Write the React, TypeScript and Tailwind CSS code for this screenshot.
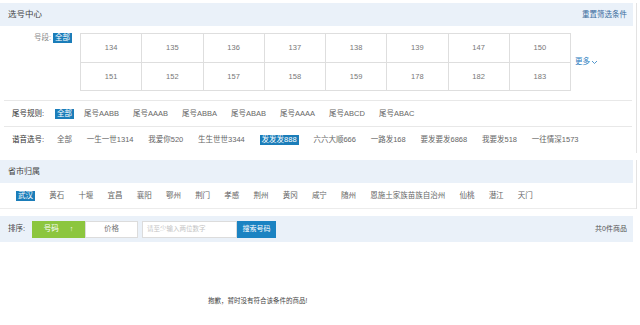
import React from 'react';

const SEGMENTS = ['134', '135', '136', '137', '138', '139', '147', '150', '151', '152', '157', '158', '159', '178', '182', '183'];
const TAIL_RULES = ['尾号AABB', '尾号AAAB', '尾号ABBA', '尾号ABAB', '尾号AAAA', '尾号ABCD', '尾号ABAC'];
const HOMOPHONES = ['全部', '一生一世1314', '我爱你520', '生生世世3344', '发发发888', '六六大顺666', '一路发168', '要发要发6868', '我要发518', '一往情深1573'];
const CITIES = ['武汉', '黄石', '十堰', '宜昌', '襄阳', '鄂州', '荆门', '孝感', '荆州', '黄冈', '咸宁', '随州', '恩施土家族苗族自治州', '仙桃', '潜江', '天门'];

const Tag = ({ children }: { children: React.ReactNode }) => (
  <span className="bg-[#1b7db9] text-white px-[2px] leading-[10px] h-[10px] inline-flex items-center whitespace-nowrap">{children}</span>
);

export default function App() {
  return (
    <div className="w-[640px] h-[325px] bg-white pt-[3px] font-['Liberation_Sans','Noto_Sans_CJK_SC',sans-serif] text-[7.5px] text-[#666] overflow-hidden whitespace-nowrap">
      {/* 选号中心 */}
      <section className="w-[637px] border-r border-[#e3e3e3]">
        <div className="w-[633px] h-[23px] bg-[#eaf1f9] flex items-center justify-between pl-[8px] pr-[6px]">
          <span className="text-[8.5px] text-[#444]">选号中心</span>
          <span className="text-[7.5px] text-[#36699c]">重置筛选条件</span>
        </div>

        <div className="flex items-start pt-[7px] pb-[9px]">
          <div className="w-[53px] flex justify-end pr-[2px] text-[#888] leading-[10px]">号段:</div>
          <Tag>全部</Tag>
          <div className="ml-[8px] w-[491px] grid grid-cols-8 border-l border-t border-[#dedede]">
            {SEGMENTS.map((s) => (
              <div key={s} className="h-[28.5px] border-r border-b border-[#dedede] flex items-center justify-center text-[#777]">
                {s}
              </div>
            ))}
          </div>
          <div className="self-center ml-[4px] flex items-center text-[#2a7dc0] text-[7.5px]">
            更多
            <svg width="7" height="5" viewBox="0 0 7 5" className="ml-[1px]">
              <path d="M1 1 L3.5 3.5 L6 1" fill="none" stroke="#2a7dc0" strokeWidth="0.8" />
            </svg>
          </div>
        </div>

        <div className="mx-[4px] border-t border-[#e8e8e8] h-[26px] flex items-center pl-[8px]">
          <span className="text-[#333] w-[43px]">尾号规则:</span>
          <Tag>全部</Tag>
          <div className="flex gap-[14px] ml-[10px]">
            {TAIL_RULES.map((r) => (
              <span key={r}>{r}</span>
            ))}
          </div>
        </div>

        <div className="mx-[4px] border-t border-[#e8e8e8] h-[27px] flex items-center pl-[8px]">
          <span className="text-[#333] w-[45px]">谐音选号:</span>
          <div className="flex items-center gap-[14.8px]">
            {HOMOPHONES.map((h) =>
              h === '发发发888' ? <Tag key={h}>{h}</Tag> : <span key={h}>{h}</span>
            )}
          </div>
        </div>
      </section>

      {/* 省市归属 */}
      <section className="mt-[7px] w-[637px] border-r border-[#e3e3e3]">
        <div className="w-[633px] h-[23px] bg-[#eaf1f9] flex items-center pl-[8px]">
          <span className="text-[8px] text-[#444]">省市归属</span>
        </div>
        <div className="h-[26px] flex items-center pl-[16px] gap-[14.2px] border-b border-[#ececec]">
          {CITIES.map((c, i) => (i === 0 ? <Tag key={c}>{c}</Tag> : <span key={c}>{c}</span>))}
        </div>
      </section>

      {/* 排序 */}
      <div className="mt-[7px] w-[633px] h-[26px] bg-[#eaf1f9] flex items-center pl-[8px] pr-[6px]">
        <span className="text-[#444] w-[24px]">排序:</span>
        <div className="w-[53px] h-[17px] bg-[#8cc63e] text-white flex items-center justify-center gap-[11px]">
          <span>号码</span>
          <span className="text-[7px] font-bold">↑</span>
        </div>
        <div className="w-[53px] h-[17px] bg-white border border-[#dcdcdc] flex items-center justify-center text-[#777]">
          价格
        </div>
        <div className="ml-[4px] w-[95px] h-[17px] bg-white border border-[#dcdcdc] flex items-center pl-[4px] text-[6.5px] text-[#c4c4c4]">
          请至少输入两位数字
        </div>
        <div className="w-[39px] h-[17px] bg-[#1b83c2] text-white flex items-center justify-center text-[7px]">
          搜索号码
        </div>
        <span className="ml-auto text-[#555] text-[7px]">共0件商品</span>
      </div>

      <div className="mt-[53px] pl-[208px]">
        <span className="text-[6.5px] text-[#444]">抱歉，暂时没有符合该条件的商品!</span>
      </div>
    </div>
  );
}
